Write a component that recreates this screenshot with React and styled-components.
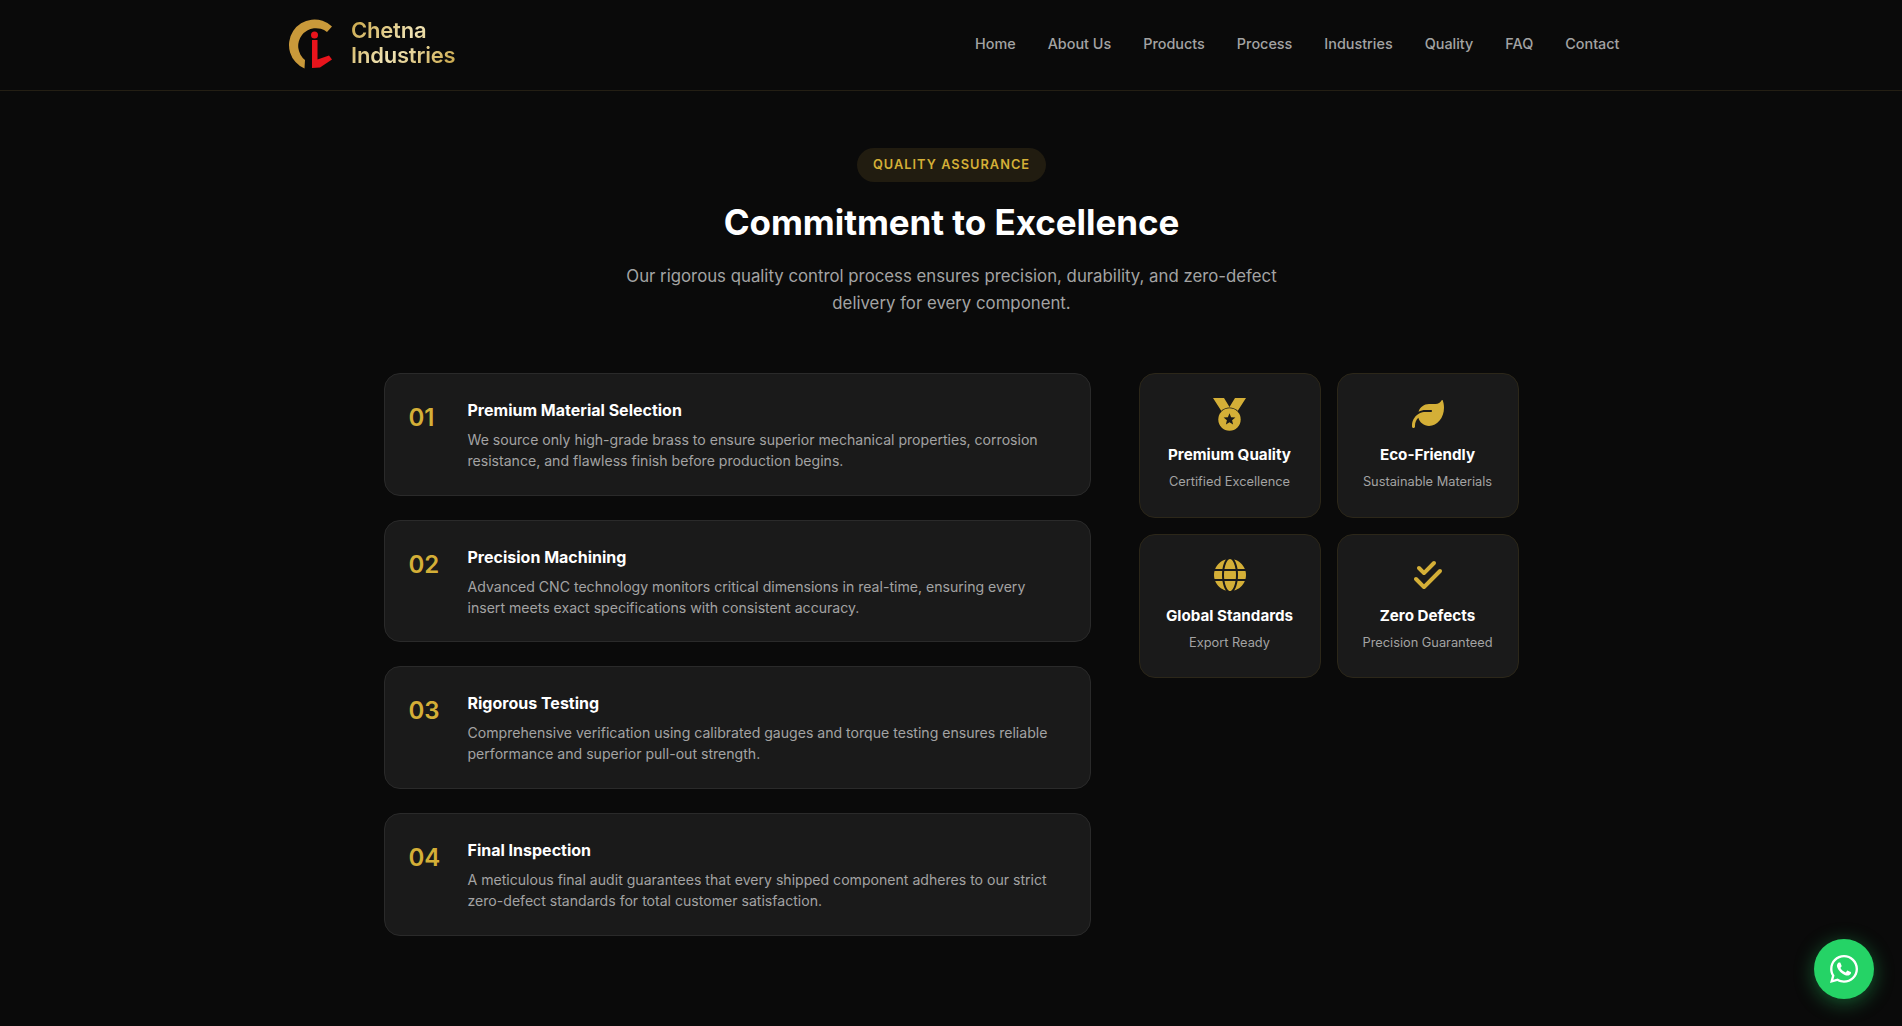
import React from "react";
import styled, { createGlobalStyle } from "styled-components";
import { FaLeaf, FaGlobe, FaCheckDouble, FaWhatsapp } from "react-icons/fa6";

const GlobalStyle = createGlobalStyle`
  html, body {
    margin: 0;
    padding: 0;
    background: #0a0a0a;
    font-family: Inter, "Liberation Sans", sans-serif;
  }
  * {
    box-sizing: border-box;
  }
`;

const Page = styled.div`
  min-height: 1026px;
  background: #0a0a0a;
  overflow: hidden;
`;

const Header = styled.header`
  height: 91px;
  padding: 0 282.5px 0 288px;
  display: flex;
  align-items: center;
  justify-content: space-between;
  border-bottom: 1px solid #241f14;
`;

const Brand = styled.div`
  display: flex;
  align-items: center;
  gap: 12px;
`;

const BrandName = styled.div`
  margin-top: -4px;
  font-size: 22px;
  line-height: 25px;
  font-weight: 600;
  letter-spacing: -0.2px;
  background: linear-gradient(135deg, #c9a545 0%, #f0e3b4 50%, #c9a545 100%);
  -webkit-background-clip: text;
  background-clip: text;
  color: transparent;
`;

const Nav = styled.nav`
  display: flex;
  gap: 32px;
  margin-top: -3px;
`;

const NavLink = styled.a`
  font-size: 14.4px;
  font-weight: 500;
  color: #a3a3a3;
  text-decoration: none;
`;

const Section = styled.section`
  width: 1135px;
  margin: 0 auto;
  padding-top: 57px;
`;

const Intro = styled.div`
  display: flex;
  flex-direction: column;
  align-items: center;
  padding-left: 1px;
  margin-bottom: 56px;
`;

const Pill = styled.span`
  padding: 9px 16px;
  height: 34px;
  border-radius: 17px;
  background: #211c10;
  color: #d4af37;
  font-size: 12.8px;
  line-height: 16px;
  font-weight: 600;
  letter-spacing: 1.02px;
`;

const Title = styled.h2`
  margin: 16px 0 0;
  font-size: 35px;
  line-height: 48px;
  font-weight: 700;
  letter-spacing: -0.05px;
  color: #ffffff;
`;

const Lead = styled.p`
  margin: 17px 0 0;
  width: 700px;
  text-align: center;
  font-size: 16.8px;
  line-height: 27px;
  color: #a3a3a3;
`;

const Columns = styled.div`
  display: grid;
  grid-template-columns: 707px 380px;
  gap: 48px;
  align-items: start;
`;

const Steps = styled.div`
  display: flex;
  flex-direction: column;
  gap: 24px;
`;

const Step = styled.article`
  height: 122.7px;
  padding: 24px;
  display: flex;
  gap: 24px;
  background: #1a1a1a;
  border: 1px solid #2a2a2a;
  border-radius: 16px;
`;

const StepNumber = styled.div`
  width: 35px;
  flex: none;
  padding-top: 4px;
  font-size: 24px;
  line-height: 32px;
  font-weight: 600;
  color: #d4af37;
`;

const StepTitle = styled.h3`
  margin: 0 0 7px;
  font-size: 16px;
  line-height: 24px;
  font-weight: 700;
  color: #ffffff;
`;

const StepText = styled.p`
  margin: 0;
  font-size: 14.08px;
  line-height: 21px;
  color: #a3a3a3;
`;

const Features = styled.div`
  display: grid;
  grid-template-columns: 1fr 1fr;
  gap: 16px;
`;

const Feature = styled.article`
  height: 144.5px;
  padding: 24px 8px;
  display: flex;
  flex-direction: column;
  align-items: center;
  background: #1a1a1a;
  border: 1px solid #2c2719;
  border-radius: 16px;
  color: #d4af37;
`;

const FeatureIcon = styled.div`
  height: 32px;
  display: flex;
  align-items: center;
  justify-content: center;
  font-size: 32px;
`;

const FeatureTitle = styled.h4`
  margin: 13px 0 0;
  font-size: 15.2px;
  line-height: 24px;
  font-weight: 700;
  color: #ffffff;
`;

const FeatureText = styled.p`
  margin: 4px 0 0;
  font-size: 12.8px;
  line-height: 21px;
  color: #a3a3a3;
`;

const ChatButton = styled.a`
  position: fixed;
  right: 28px;
  bottom: 27px;
  width: 60px;
  height: 60px;
  display: flex;
  align-items: center;
  justify-content: center;
  border-radius: 50%;
  background: #25d366;
  color: #ffffff;
  font-size: 32px;
  box-shadow: 0 4px 20px rgba(37, 211, 102, 0.4);
`;

function Logo() {
  return (
    <svg width="51" height="70" viewBox="0 0 51 70">
      <g transform="translate(-8 0)">
        <path
          d="M52 16.5 A25.5 25.5 0 1 0 24.5 58.5 L25 50 A17.8 17.8 0 1 1 47 22 Z"
          fill="#c9993a"
        />
        <circle cx="34.5" cy="25" r="3.5" fill="#e8141c" />
        <path d="M32 30 H37.5 V49.5 L49 45.5 L52 49.5 L40 57.5 L32 58 Z" fill="#e8141c" />
      </g>
    </svg>
  );
}

function MedalIcon() {
  return (
    <svg width="33" height="33" viewBox="0 0 33 33">
      <path d="M0 0 H11 L16.5 9 L22 0 H33 L24 14 H9 Z" fill="currentColor" />
      <circle cx="16.5" cy="21.5" r="12" fill="#1a1a1a" />
      <circle cx="16.5" cy="21.5" r="11.2" fill="currentColor" />
      <path
        d="M16.5 15.3 L18.1 19.3 L22.4 19.6 L19.1 22.3 L20.1 26.5 L16.5 24.2 L12.9 26.5 L13.9 22.3 L10.6 19.6 L14.9 19.3 Z"
        fill="#1a1a1a"
      />
    </svg>
  );
}

const links = ["Home", "About Us", "Products", "Process", "Industries", "Quality", "FAQ", "Contact"];

const steps = [
  {
    title: "Premium Material Selection",
    text: "We source only high-grade brass to ensure superior mechanical properties, corrosion resistance, and flawless finish before production begins.",
  },
  {
    title: "Precision Machining",
    text: "Advanced CNC technology monitors critical dimensions in real-time, ensuring every insert meets exact specifications with consistent accuracy.",
  },
  {
    title: "Rigorous Testing",
    text: "Comprehensive verification using calibrated gauges and torque testing ensures reliable performance and superior pull-out strength.",
  },
  {
    title: "Final Inspection",
    text: "A meticulous final audit guarantees that every shipped component adheres to our strict zero-defect standards for total customer satisfaction.",
  },
];

const features = [
  { icon: <MedalIcon />, title: "Premium Quality", text: "Certified Excellence" },
  { icon: <FaLeaf />, title: "Eco-Friendly", text: "Sustainable Materials" },
  { icon: <FaGlobe />, title: "Global Standards", text: "Export Ready" },
  { icon: <FaCheckDouble />, title: "Zero Defects", text: "Precision Guaranteed" },
];

export default function App() {
  return (
    <Page>
      <GlobalStyle />
      <Header>
        <Brand>
          <Logo />
          <BrandName>
            Chetna
            <br />
            Industries
          </BrandName>
        </Brand>
        <Nav>
          {links.map((link) => (
            <NavLink key={link} href="#">
              {link}
            </NavLink>
          ))}
        </Nav>
      </Header>
      <Section>
        <Intro>
          <Pill>QUALITY ASSURANCE</Pill>
          <Title>Commitment to Excellence</Title>
          <Lead>
            Our rigorous quality control process ensures precision, durability, and zero-defect
            <br />
            delivery for every component.
          </Lead>
        </Intro>
        <Columns>
          <Steps>
            {steps.map((step, i) => (
              <Step key={step.title}>
                <StepNumber>0{i + 1}</StepNumber>
                <div>
                  <StepTitle>{step.title}</StepTitle>
                  <StepText>{step.text}</StepText>
                </div>
              </Step>
            ))}
          </Steps>
          <Features>
            {features.map((feature) => (
              <Feature key={feature.title}>
                <FeatureIcon>{feature.icon}</FeatureIcon>
                <FeatureTitle>{feature.title}</FeatureTitle>
                <FeatureText>{feature.text}</FeatureText>
              </Feature>
            ))}
          </Features>
        </Columns>
      </Section>
      <ChatButton href="#">
        <FaWhatsapp />
      </ChatButton>
    </Page>
  );
}
